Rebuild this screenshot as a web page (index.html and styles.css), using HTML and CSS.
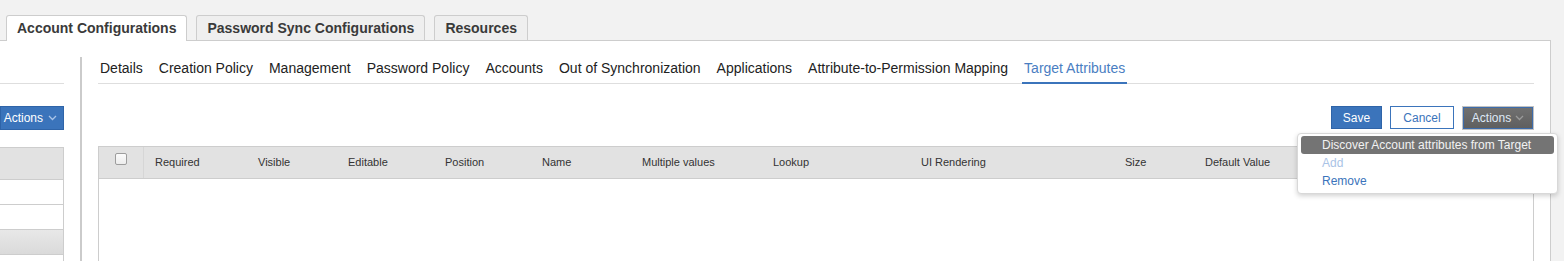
FILE: index.html
```html
<!DOCTYPE html>
<html lang="en">
<head>
    <meta charset="UTF-8">
    <title>Account Configurations</title>
    <link rel="stylesheet" href="styles.css">
</head>
<body>
    <div class="tabs">
        <a href="#" class="tab on">Account Configurations</a>
        <a href="#" class="tab">Password Sync Configurations</a>
        <a href="#" class="tab">Resources</a>
    </div>
    <div class="panel">
        <div class="side">
            <div class="side-head"></div>
            <div class="side-bar">
                <a href="#" class="btn btn-blue">Actions
                    <svg width="9" height="6" viewBox="0 0 9 6"><polyline points="1,1 4.5,4.5 8,1" fill="none" stroke="#a9c4e8" stroke-width="1.3"/></svg>
                </a>
            </div>
            <div class="side-table">
                <div class="side-th"></div>
                <div class="side-row"></div>
                <div class="side-row"></div>
                <div class="side-row sel"></div>
                <div class="side-row last"></div>
            </div>
        </div>
        <div class="divider"></div>
        <div class="main">
            <ul class="subtabs">
                <li>Details</li>
                <li>Creation Policy</li>
                <li>Management</li>
                <li>Password Policy</li>
                <li>Accounts</li>
                <li>Out of Synchronization</li>
                <li>Applications</li>
                <li>Attribute-to-Permission Mapping</li>
                <li class="on">Target Attributes</li>
            </ul>
            <div class="toolbar">
                <a href="#" class="btn btn-blue btn-save">Save</a>
                <a href="#" class="btn btn-white">Cancel</a>
                <div class="menu-wrap">
                    <a href="#" class="btn btn-dark">Actions
                        <svg width="9" height="6" viewBox="0 0 9 6"><polyline points="1,1 4.5,4.5 8,1" fill="none" stroke="#9a9a9a" stroke-width="1.3"/></svg>
                    </a>
                    <ul class="menu">
                        <li class="hot">Discover Account attributes from Target</li>
                        <li class="off">Add</li>
                        <li>Remove</li>
                    </ul>
                </div>
            </div>
            <div class="grid">
                <div class="grid-head">
                    <div class="cell cell-check"><span class="check"></span></div>
                    <div class="cell">Required</div>
                    <div class="cell">Visible</div>
                    <div class="cell">Editable</div>
                    <div class="cell">Position</div>
                    <div class="cell">Name</div>
                    <div class="cell">Multiple values</div>
                    <div class="cell">Lookup</div>
                    <div class="cell">UI Rendering</div>
                    <div class="cell">Size</div>
                    <div class="cell">Default Value</div>
                </div>
                <div class="grid-body"></div>
            </div>
        </div>
    </div>
</body>
</html>
```

FILE: styles.css
```css
*{
    margin: 0px;
    padding: 0px;
    list-style: none;
    box-sizing: border-box;
}
body{
    background: #f2f2f2;
    font-family: "Liberation Sans", Arial, sans-serif;
    color: #333;
    height: 261px;
    overflow: hidden;
}
a{
    text-decoration: none;
}

/* top tabs */
.tabs{
    display: flex;
    gap: 9px;
    padding: 15px 0 0 6px;
}
.tab{
    height: 25px;
    padding: 0 10px;
    line-height: 24px;
    font-size: 14px;
    font-weight: bold;
    color: #3a3a3a;
    background: #efefef;
    border: 1px solid #cdcdcd;
    border-bottom: none;
    border-radius: 3px 3px 0 0;
}
.tab.on{
    background: #fff;
    height: 26px;
    margin-bottom: -1px;
    position: relative;
    z-index: 1;
}

/* panel */
.panel{
    display: flex;
    width: 1552px;
    height: 221px;
    margin-left: -1px;
    padding-right: 16px;
    background: #fff;
    border: 1px solid #cdcdcd;
    border-bottom: none;
}
.side{
    width: 64px;
    flex: none;
}
.side-head{
    height: 43px;
    border-bottom: 1px solid #dedede;
}
.side-bar{
    display: flex;
    justify-content: flex-end;
    margin-top: 22px;
}
.side-table{
    margin-top: 17px;
    border-top: 1px solid #cdcdcd;
    border-right: 1px solid #cdcdcd;
}
.side-th{
    height: 32px;
    background: #e2e2e2;
    border-bottom: 1px solid #cdcdcd;
}
.side-row{
    height: 25px;
    border-bottom: 1px solid #cdcdcd;
}
.side-row.sel{
    background: linear-gradient(#e8e8e8, #dadada);
}
.side-row.last{
    height: 7px;
    border-bottom: none;
}
.divider{
    width: 2px;
    flex: none;
    margin: 16px 16px 0;
    background: #cbcbcb;
}
.main{
    width: 1436px;
    flex: none;
}

/* sub tabs */
.subtabs{
    display: flex;
    gap: 12px;
    margin-top: 19px;
    border-bottom: 1px solid #dedede;
}
.subtabs li{
    padding: 0 2px 5px;
    margin-bottom: -1px;
    font-size: 14px;
    line-height: 17px;
    color: #222;
    border-bottom: 2px solid transparent;
}
.subtabs li.on{
    color: #4a7ec2;
    border-bottom-color: #3b74bb;
}

/* buttons */
.toolbar{
    display: flex;
    justify-content: flex-end;
    gap: 8px;
    margin-top: 22px;
}
.btn{
    display: flex;
    align-items: center;
    gap: 5px;
    height: 24px;
    padding: 0 11px;
    font-size: 12px;
    border: 1px solid #2f64a8;
    cursor: pointer;
}
.btn-blue{
    color: #fff;
    background: #3b74bb;
}
.side-bar .btn{
    padding: 0 6px 0 3px;
}
.btn-save{
    width: 51px;
    justify-content: center;
    padding: 0;
    height: 23px;
}
.btn-white{
    color: #3b74bb;
    background: #fff;
    border-color: #3b74bb;
    height: 23px;
    width: 64px;
    justify-content: center;
}
.btn-dark{
    color: #dfe9f6;
    background: linear-gradient(#707070, #5f5f5f);
    border-color: #3d6cab;
    box-shadow: 0 0 0 1px #c2c2c2;
    width: 70px;
    height: 22px;
    margin: 1px 1px 0 1px;
    padding: 0;
    gap: 4px;
    justify-content: center;
}
.menu-wrap{
    position: relative;
}
.menu{
    position: absolute;
    top: 27px;
    right: -24px;
    z-index: 3;
    width: 261px;
    padding: 2px 3px 3px;
    background: #fff;
    border: 1px solid #d8d8d8;
    border-radius: 4px;
    box-shadow: 0 2px 5px rgba(0, 0, 0, 0.18);
}
.menu li{
    height: 18px;
    line-height: 18px;
    padding-left: 21px;
    font-size: 12px;
    color: #3b74bb;
    border-radius: 3px;
}
.menu li.hot{
    color: #f2f2f2;
    background: #747474;
}
.menu li.off{
    color: #a9c3e6;
}

/* table */
.grid{
    margin-top: 17px;
    border: 1px solid #cdcdcd;
    border-bottom: none;
}
.grid-head{
    display: grid;
    grid-template-columns: 45px 103px 90px 97px 97px 100px 131px 148px 204px 80px 1fr;
    height: 32px;
    background: #e2e2e2;
    border-bottom: 1px solid #cdcdcd;
}
.cell{
    padding-left: 11px;
    font-size: 11px;
    line-height: 31px;
    color: #333;
}
.cell-check{
    padding: 6px 0 0 16px;
    border-right: 1px solid #d6d6d6;
}
.check{
    display: block;
    width: 12px;
    height: 12px;
    border: 1px solid #9d9d9d;
    border-radius: 2px;
    background: linear-gradient(#fbfbfb, #ececec);
}
.grid-body{
    height: 82px;
}
```
